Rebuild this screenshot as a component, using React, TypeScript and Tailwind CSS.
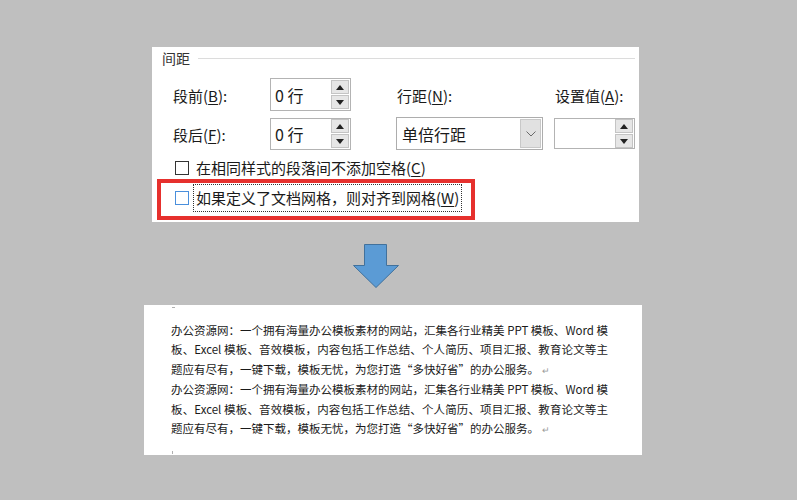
import type { ReactNode } from "react"

const para = [
	"办公资源网：一个拥有海量办公模板素材的网站，汇集各行业精美 PPT 模板、Word 模",
	"板、Excel 模板、音效模板，内容包括工作总结、个人简历、项目汇报、教育论文等主",
]

function Key({ k }: { k: string }) {
	return <span className="underline underline-offset-2">{k}</span>
}

function Label({ text, k, tail = ":" }: { text: string; k: string; tail?: string }) {
	return (
		<span className="text-[15px] leading-[20px] text-[#1a1a1a]">
			{text}(<Key k={k} />){tail}
		</span>
	)
}

function Arrow({ up }: { up?: boolean }) {
	return (
		<div className="flex h-[14px] w-[18px] items-center justify-center border border-[#c4c4c4] bg-[#e6e6e6]">
			<svg width="8" height="5" viewBox="0 0 8 5">
				{up ? <polygon points="0,5 8,5 4,0" fill="#222" /> : <polygon points="0,0 8,0 4,5" fill="#222" />}
			</svg>
		</div>
	)
}

function Spin({ value, h = "h-[33px]" }: { value?: string; h?: string }) {
	return (
		<div className={`flex w-[81px] items-center border border-[#b3b3b3] bg-white pl-[4px] pr-[1px] ${h}`}>
			<span className="flex-1 text-[16px] leading-[20px] text-[#1a1a1a]">{value}</span>
			<div className="flex flex-col gap-[1px]">
				<Arrow up />
				<Arrow />
			</div>
		</div>
	)
}

function Check({ blue, children }: { blue?: boolean; children: ReactNode }) {
	return (
		<div className="flex items-center">
			<div
				className={`h-[14px] w-[14px] border bg-white ${blue ? "border-[#4a8fdc]" : "border-[#333333]"}`}
			/>
			{children}
		</div>
	)
}

// last line of each paragraph, quotes kept full width like in Word
function LastLine() {
	return (
		<div className="text-left">
			题应有尽有，一键下载，模板无忧，为您打造
			<span className="inline-block w-[1em] text-right">“</span>
			多快好省
			<span className="inline-block w-[1em] text-left">”</span>
			的办公服务。
			<span className="ml-[3px] text-[9px] text-[#9a9a9a]">↵</span>
		</div>
	)
}

export default function App() {
	return (
		<div className="min-h-[500px] w-full bg-[#bfbfbf] pt-[47px] font-['Noto_Sans_CJK_SC','Noto_Sans',sans-serif]">
			{/* paragraph dialog excerpt */}
			<div className="ml-[152px] flex h-[175px] w-[487px] flex-col bg-white">
				<div className="flex items-center pl-[10px] pr-[4px] pt-[3px]">
					<span className="text-[14px] leading-[16px] text-[#333]">间距</span>
					<div className="ml-[8px] h-px flex-1 bg-[#dcdcdc]" />
				</div>

				<div className="mt-[12px] flex h-[33px] items-center">
					<div className="w-[118px] pl-[21px]">
						<Label text="段前" k="B" />
					</div>
					<div className="w-[126px]">
						<Spin value="0 行" />
					</div>
					<div className="w-[158px] pl-[1px]">
						<Label text="行距" k="N" />
					</div>
					<div className="pl-[1px]">
						<Label text="设置值" k="A" />
					</div>
				</div>

				<div className="mt-[6px] flex h-[33px] items-center">
					<div className="w-[118px] pl-[21px]">
						<Label text="段后" k="F" />
					</div>
					<div className="w-[126px]">
						<Spin value="0 行" h="h-[32px]" />
					</div>
					<div className="w-[158px]">
						<div className="flex h-[33px] w-[147px] items-stretch border border-[#adadad] bg-white">
							<span className="flex-1 self-center pl-[5px] text-[16px] leading-[20px] text-[#1a1a1a]">
								单倍行距
							</span>
							<div className="m-px flex w-[21px] items-center justify-center border border-[#c8c8c8] bg-[#e1e1e1]">
								<svg width="10" height="6" viewBox="0 0 10 6">
									<polyline points="0.5,0.5 5,5 9.5,0.5" fill="none" stroke="#6a6a6a" strokeWidth="1" />
								</svg>
							</div>
						</div>
					</div>
					<Spin h="h-[31px]" />
				</div>

				<div className="ml-[23px] mt-[8px] flex h-[20px] items-center">
					<Check>
						<span className="ml-[7px] text-[15px] leading-[20px] text-[#1a1a1a]">
							在相同样式的段落间不添加空格(<Key k="C" />)
						</span>
					</Check>
				</div>

				<div className="ml-[5px] mt-px flex h-[41px] w-[318px] items-start border-4 border-[#e6302d] pl-[14px]">
					<div className="mt-px">
						<Check blue>
							<div className="ml-[4px] flex h-[28px] items-center border border-dotted border-[#333] px-[2px]">
								<span className="text-[15px] leading-[20px] text-[#1a1a1a]">
									如果定义了文档网格，则对齐到网格(<Key k="W" />)
								</span>
							</div>
						</Check>
					</div>
				</div>
			</div>

			{/* arrow */}
			<div className="ml-[353px] mt-[22px] h-[44px] w-[46px]">
				<svg width="46" height="44" viewBox="0 0 46 44">
					<polygon
						points="11.5,0.5 33.5,0.5 33.5,21.5 45.5,21.5 23,43.5 0.5,21.5 11.5,21.5"
						fill="#5b9bd5"
						stroke="#41719c"
						strokeWidth="1"
					/>
				</svg>
			</div>

			{/* document result */}
			<div className="ml-[144px] mt-[17px] flex h-[150px] w-[498px] flex-col bg-white pl-[27px]">
				{/* cut-off paragraph mark of the line above */}
				<div className="ml-px h-[3px] w-[3px] border-b border-[#b0b0b0]" />
				<div className="mt-[13px] w-[437px] text-[11.5px] leading-[19.4px] text-[#1a1a1a]">
					{[0, 1].map((p) => (
						<div key={p}>
							{para.map((t, i) => (
								<div key={i} className="text-justify [text-align-last:justify]">
									{t}
								</div>
							))}
							<LastLine />
						</div>
					))}
				</div>
				<div className="ml-px mt-auto mb-[1px] h-[3px] w-px bg-[#b0b0b0]" />
			</div>
		</div>
	)
}
